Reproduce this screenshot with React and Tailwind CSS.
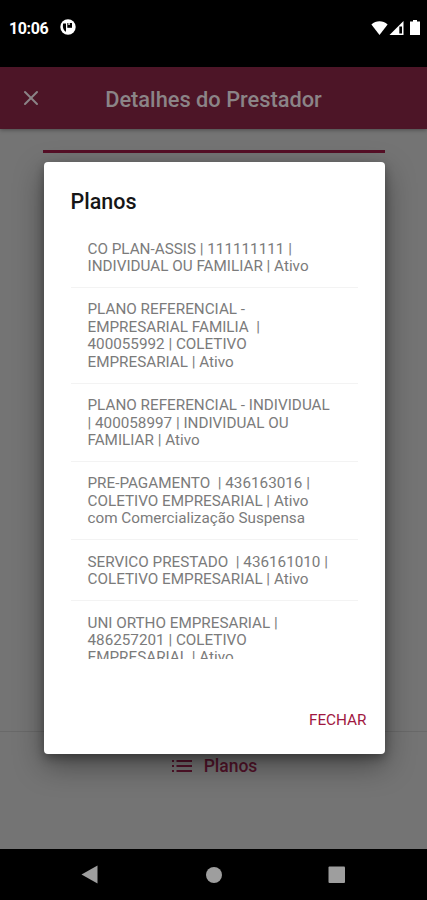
import { X } from "lucide-react";

const plans = [
  ["CO PLAN-ASSIS | 111111111 |", "INDIVIDUAL OU FAMILIAR | Ativo"],
  ["PLANO REFERENCIAL -", "EMPRESARIAL FAMILIA  |", "400055992 | COLETIVO", "EMPRESARIAL | Ativo"],
  ["PLANO REFERENCIAL - INDIVIDUAL", "| 400058997 | INDIVIDUAL OU", "FAMILIAR | Ativo"],
  ["PRE-PAGAMENTO  | 436163016 |", "COLETIVO EMPRESARIAL | Ativo", "com Comercialização Suspensa"],
  ["SERVICO PRESTADO  | 436161010 |", "COLETIVO EMPRESARIAL | Ativo"],
  ["UNI ORTHO EMPRESARIAL |", "486257201 | COLETIVO", "EMPRESARIAL | Ativo"],
];

function StatusBar() {
  return (
    <div className="h-[67px] shrink-0 bg-black flex items-start text-white pt-[18px] pl-[9px] pr-[7px]">
      <span className="text-[16px] leading-[20px] font-bold tracking-[-0.4px] pt-px">10:06</span>
      <svg className="w-4 h-4 ml-[12px] mt-[1px]" viewBox="0 0 16 16">
        <circle cx="8" cy="8" r="7.7" fill="#fff" />
        <path d="M3.200 4.500h2.800v8.200C3.400 11.500 2.200 8 3.200 4.500z" fill="#000" />
        <path d="M7.300 4h4.700v4.800H7.300z" fill="#000" />
        <path d="M8.400 4h1.300v2H8.400z" fill="#fff" />
      </svg>
      <div className="ml-auto flex items-center mt-[2px]">
        <svg className="w-[17px] h-[14px]" viewBox="0 0 17 14">
          <path d="M.4 3.4C5-.9 12-.9 16.600 3.400L8.500 14z" fill="#fff" />
        </svg>
        <svg className="w-[15px] h-[14px] ml-px" viewBox="0 0 15 14">
          <path d="M14.500 0v14H.5z" fill="#fff" />
          <path d="M10.300 5.500h2.700v7h-2.700z" fill="#000" />
        </svg>
        <svg className="w-[10px] h-[15px] ml-[6px]" viewBox="0 0 10 15">
          <path d="M3 0h4v1.600h3V15H0V1.600h3z" fill="#fff" />
        </svg>
      </div>
    </div>
  );
}

function Header() {
  return (
    <header className="h-[62px] shrink-0 bg-[#4d1527] text-[#8b8487] flex items-center relative shadow-[0_1px_4px_rgba(0,0,0,0.35)]">
      <button className="absolute left-[19px] top-[19px]">
        <X size={24} strokeWidth={2} />
      </button>
      <h1 className="w-full text-center text-[21.800px] font-medium pt-[4px]">Detalhes do Prestador</h1>
    </header>
  );
}

function PlansDialog() {
  return (
    <div className="absolute left-[43.5px] top-[162px] w-[341px] h-[592px] bg-white rounded-[4px] shadow-[0_11px_30px_rgba(0,0,0,0.4),0_4px_10px_rgba(0,0,0,0.3)] flex flex-col">
      <h2 className="pl-[27px] pt-[26px] h-[65px] shrink-0 text-[21.500px] leading-[28px] font-medium text-[#161616]">Planos</h2>
      <ul className="mx-[27px] h-[432px] overflow-hidden">
        {plans.map((lines) => (
          <li
            key={lines[0]}
            className="pl-[17px] pt-[13.500px] pb-[11.600px] border-b border-[#f3f3f3] text-[15.250px] leading-[17.400px] text-[#7b7b7b] whitespace-pre"
          >
            {lines.map((line) => (
              <div key={line}>{line}</div>
            ))}
          </li>
        ))}
      </ul>
      <div className="flex justify-end pr-[18px] pt-[51px]">
        <button className="text-[15.300px] leading-[20px] text-[#a0173f]">FECHAR</button>
      </div>
    </div>
  );
}

function NavBar() {
  return (
    <nav className="h-[51px] shrink-0 bg-black">
      <svg className="w-full h-full" viewBox="0 0 427 51" fill="#9e9e9e">
        <path d="M81.500 25.500L97.500 16.500v18z" />
        <circle cx="214" cy="26" r="8" />
        <rect x="328.500" y="17.500" width="16.500" height="16.500" rx="1" />
      </svg>
    </nav>
  );
}

export default function App() {
  return (
    <div className="relative w-full h-[900px] overflow-hidden bg-[#747474] flex flex-col font-[Roboto,sans-serif]">
      <StatusBar />
      <Header />
      <main className="flex-1 flex flex-col">
        <div className="mx-[42.500px] mt-[20.500px] h-[3px] bg-[#560f26]" />
        <div className="mt-auto h-[118px] border-t border-[#696969] flex items-start justify-center pl-[2px] pt-[23px] text-[#53132a]">
          <svg className="w-5 h-3 mt-[5px] mr-[12px]" viewBox="0 0 20 12" fill="currentColor">
            <path d="M0 0h2v2H0zM4.500 0H20v2H4.500zM0 5h2v2H0zM4.500 5H20v2H4.500zM0 10h2v2H0zM4.500 10H20v2H4.500z" />
          </svg>
          <span className="text-[17.500px] leading-[22px] font-medium">Planos</span>
        </div>
      </main>
      <NavBar />
      <PlansDialog />
    </div>
  );
}
